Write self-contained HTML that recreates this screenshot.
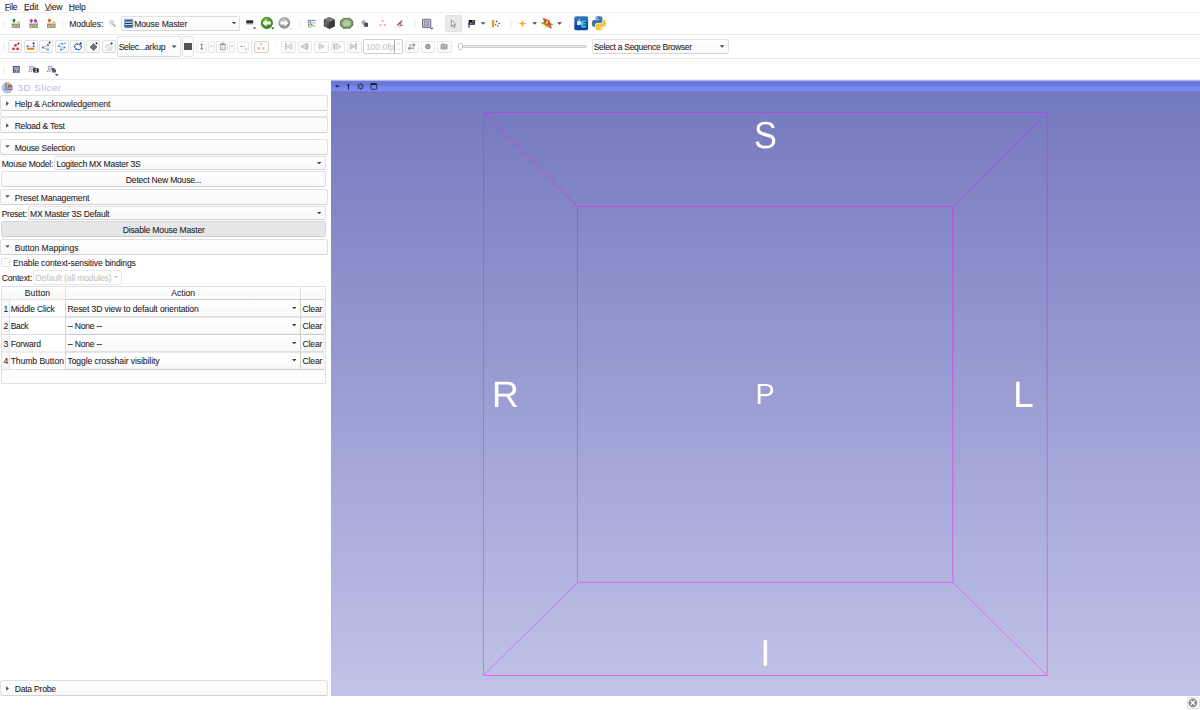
<!DOCTYPE html>
<html><head><meta charset="utf-8"><title>3D Slicer</title>
<style>
html,body{margin:0;padding:0;background:#fff;overflow:hidden}
body{width:1200px;height:710px;position:relative;font-family:"Liberation Sans", sans-serif;}
body div, body svg, body span{position:absolute;}
.t{transform-origin:0 0;white-space:pre;line-height:12px;font-family:"Liberation Sans", sans-serif;-webkit-text-stroke:0.06px currentColor;}
</style></head>
<body>
<span class="t" style="left:4px;top:0px;transform:translate(0.66px,0.5px) rotate(0.001deg);font-size:8.6px;letter-spacing:-0.289px;color:#1e2022;">File</span>
<span class="t" style="left:23px;top:0px;transform:translate(0.96px,0.5px) rotate(0.001deg);font-size:8.6px;letter-spacing:-0.153px;color:#1e2022;">Edit</span>
<span class="t" style="left:44px;top:0px;transform:translate(0.66px,0.5px) rotate(0.001deg);font-size:8.6px;letter-spacing:-0.196px;color:#1e2022;">View</span>
<span class="t" style="left:68px;top:0px;transform:translate(0.66px,0.5px) rotate(0.001deg);font-size:8.6px;letter-spacing:-0.171px;color:#1e2022;">Help</span>
<svg style="left:0;top:9px" width="90" height="3" viewBox="0 9 90 3"><path d="M5.1 10.45H9M24.4 10.45H28.8M45 10.45H50.2M69 10.45H74.6" stroke="#4a4c4e" stroke-width="0.7"/></svg>
<div style="left:0px;top:12px;width:1200px;height:1px;background:#efefef"></div>
<div style="left:0px;top:34px;width:1200px;height:1px;background:#e9e9e9"></div>
<div style="left:0px;top:58px;width:1200px;height:1px;background:#e9e9e9"></div>
<div style="left:0px;top:79px;width:1200px;height:1px;background:#ebebeb"></div>
<div style="left:2.9000000000000004px;top:19.5px;width:1.8px;height:8px;background:#f4f4f4;border-radius:1px"></div>
<div style="left:62.7px;top:19.5px;width:1.8px;height:8px;background:#f4f4f4;border-radius:1px"></div>
<div style="left:299.2px;top:19.5px;width:1.8px;height:8px;background:#f4f4f4;border-radius:1px"></div>
<div style="left:414.2px;top:19.5px;width:1.8px;height:8px;background:#f4f4f4;border-radius:1px"></div>
<div style="left:440.7px;top:19.5px;width:1.8px;height:8px;background:#f4f4f4;border-radius:1px"></div>
<div style="left:510.2px;top:19.5px;width:1.8px;height:8px;background:#f4f4f4;border-radius:1px"></div>
<div style="left:568.7px;top:19.5px;width:1.8px;height:8px;background:#f4f4f4;border-radius:1px"></div>
<span class="t" style="left:69px;top:17px;transform:translate(0.16px,0.5px) rotate(0.001deg);font-size:8.6px;letter-spacing:-0.097px;color:#1e2022;">Modules:</span>
<div style="left:121px;top:16px;width:119px;height:15px;border:1px solid #e0e0e0;border-bottom-color:#d4d4d4;border-radius:2.5px;background:linear-gradient(#fff,#fafafa);box-sizing:border-box"></div>
<span class="t" style="left:134px;top:17px;transform:translate(0.16px,0.5px) rotate(0.001deg);font-size:8.6px;letter-spacing:-0.113px;color:#1e2022;">Mouse Master</span>
<svg style="left:0px;top:13px" width="620" height="21" viewBox="0 13 620 21">
<defs>
<linearGradient id="gFold" x1="0" y1="0" x2="0" y2="1"><stop offset="0" stop-color="#eadb96"/><stop offset="0.28" stop-color="#d9c984"/><stop offset="0.3" stop-color="#8f8b7c"/><stop offset="0.78" stop-color="#9a9685"/><stop offset="0.8" stop-color="#c9b873"/><stop offset="1" stop-color="#a8975a"/></linearGradient>
<radialGradient id="gGreen" cx="0.38" cy="0.3" r="0.75"><stop offset="0" stop-color="#7cc44c"/><stop offset="0.55" stop-color="#4a9a28"/><stop offset="1" stop-color="#2f7a18"/></radialGradient>
<radialGradient id="gGrey" cx="0.4" cy="0.3" r="0.75"><stop offset="0" stop-color="#c4c4c4"/><stop offset="0.6" stop-color="#9c9c9c"/><stop offset="1" stop-color="#858585"/></radialGradient>
<linearGradient id="gHist" x1="0" y1="0" x2="0" y2="1"><stop offset="0" stop-color="#0a0a0a"/><stop offset="0.45" stop-color="#3a3a3a"/><stop offset="0.75" stop-color="#a8a8a8"/><stop offset="1" stop-color="#f2f2f2"/></linearGradient>
<linearGradient id="gMod" x1="0" y1="0" x2="0" y2="1"><stop offset="0" stop-color="#7aa8dc"/><stop offset="1" stop-color="#5585c0"/></linearGradient>
<linearGradient id="gExt" x1="0" y1="0" x2="0" y2="1"><stop offset="0" stop-color="#3f7cc4"/><stop offset="0.5" stop-color="#1458ac"/><stop offset="1" stop-color="#06409a"/></linearGradient>
<radialGradient id="gBrain" cx="0.5" cy="0.5" r="0.6"><stop offset="0" stop-color="#b4cca4"/><stop offset="0.6" stop-color="#8eac7c"/><stop offset="1" stop-color="#4c6a3a"/></radialGradient>
<g id="fold"><path d="M0.2 4.3H5.4L6 2.9H7.9L8.5 4.3V9.3H0.2Z" fill="#a89a62"/><path d="M5.7 4.2L6.2 3.2H7.7L8.1 4.2Z" fill="#ecd673"/><rect x="0.5" y="4.5" width="7.8" height="4.6" fill="url(#gFold)"/><path d="M1.2 7.2H2.6M3.2 6.6H4.6M5.2 7.3H7.2M1.4 8H3M5.6 6.6H7" stroke="#e8e6dc" stroke-width="0.7"/></g>
<path id="dd" d="M0 0H4.4L2.2 2.3Z"/>
</defs>
<!-- load data icons -->
<use href="#fold" x="11.5" y="18.6"/><path d="M14 18.5L16.3 20.6H15V22.6H13V20.6H11.7Z" fill="#238052"/>
<use href="#fold" x="29.2" y="18.6"/><path d="M31.3 18.7L33.1 20.6L31.9 22.8H30.7L29.5 20.6Z M35.4 18.7L37.3 20.6L36 22.8H34.8L33.6 20.6Z" fill="#a63fc6"/>
<use href="#fold" x="46.9" y="18.6"/><path d="M48.3 18.8H50.5V20.4H51.4L49.4 22.8L47.4 20.4H48.3Z" fill="#d4500f"/>
<!-- search -->
<path d="M113 24L115 26.2" stroke="#d2a05c" stroke-width="1.5" stroke-linecap="round"/><circle cx="111.7" cy="22.4" r="2.4" fill="#c3daf5"/>
<!-- module icon -->
<rect x="124" y="18.8" width="9.2" height="9.2" rx="1.4" fill="url(#gMod)"/>
<path d="M125.2 21H132.2M125.2 23.4H132.2M125.2 25.7H132.2" stroke="#1c2c40" stroke-width="1"/>
<path d="M125.4 22.2H132M125.4 24.6H132" stroke="#e8f2f8" stroke-width="0.9"/>
<use href="#dd" x="231.8" y="22" fill="#444"/>
<!-- history -->
<rect x="246.2" y="20.4" width="7" height="4.6" fill="url(#gHist)"/>
<use href="#dd" x="252.8" y="27.4" fill="#444" transform="translate(50.56 5.48) scale(0.8)"/>
<!-- back / forward -->
<circle cx="266.8" cy="22.9" r="5.9" fill="url(#gGreen)"/><circle cx="266.8" cy="22.9" r="5.6" fill="none" stroke="#2c7416" stroke-width="0.6"/>
<path d="M262.6 23L266.4 19.3V21.6H270.8V24.4H266.4V26.7Z" fill="#fff"/>
<path d="M271 27.5H274.6L272.8 29.5Z" fill="#444"/>
<circle cx="284.3" cy="22.9" r="5.9" fill="url(#gGrey)"/>
<path d="M288.5 23L284.7 19.3V21.6H280.3V24.4H284.7V26.7Z" fill="#fff"/>
<path d="M289 28H292.2L290.6 29.6Z" fill="#cfcfcf"/>
<!-- data tree -->
<path d="M308.4 20V27.3" stroke="#8a8a8a" stroke-width="0.9"/><path d="M308 20.3H315.8" stroke="#6a6a6a" stroke-width="0.8"/><path d="M311.5 23H315.8M311.8 26H315.8" stroke="#b4b4b4" stroke-width="1.1"/>
<rect x="309.5" y="21.2" width="1.7" height="2" fill="#5a9cf0"/><path d="M309.6 23.4H311.2L312.7 25.4H311Z" fill="#2f9e52"/><circle cx="312.2" cy="25.2" r="0.9" fill="#6fd08a"/><rect x="309.3" y="24.6" width="1.4" height="1.8" fill="#fff" stroke="#999" stroke-width="0.3"/><circle cx="310.4" cy="27" r="0.9" fill="#f2a340"/>
<!-- cube -->
<path d="M329.2 17.1L334.7 19.6V26.3L329.2 29L323.8 26.3V19.6Z" fill="#4a4a4a"/><path d="M329.2 17.1L334.7 19.6L329.2 22.2L323.8 19.6Z" fill="#7c7c7c"/><path d="M329.2 22.2L334.7 19.6V26.3L329.2 29Z" fill="#383838"/><path d="M326 20.7V27.3M323.8 23H329.2" stroke="#9a9a9a" stroke-width="0.5"/>
<!-- brain volume rendering -->
<path d="M343.4 18.4H349.8L352.8 21.1V25.5L349.8 28.2H343.4L340.4 25.5V21.1Z" fill="url(#gBrain)" stroke="#40602e" stroke-width="0.7"/><path d="M345.2 21.2C343.6 21.2 343.4 25.4 345 25.6C346.2 25.7 346.4 24.2 346.4 23.2M348 21.2C349.6 21.2 349.8 25.4 348.2 25.6C347 25.7 346.8 24.2 346.8 23.2M346.6 19.8V21.6" stroke="#d6e4cc" stroke-width="0.8" fill="none"/>
<!-- transforms -->
<path d="M363.6 19.6L366.6 22.6L363.6 25.6L360.8 22.6Z" fill="#b2b2b2"/><rect x="364.2" y="22.9" width="3.8" height="3.9" fill="#4c4c4c"/>
<!-- markups (salmon) -->
<g fill="#f5aa9a"><path d="M381.3 20.1H383.9L382.6 22.6Z"/><path d="M379.1 24H381.9L380.5 26.7Z"/><path d="M383.3 24H386.1L384.7 26.7Z"/><path d="M381.6 19.6L383.6 21.4M383.6 19.6L381.6 21.4" stroke="#f5aa9a" stroke-width="0.5"/></g>
<!-- segment editor -->
<path d="M397.6 25L402 20.8" stroke="#4e4e4e" stroke-width="1.1" stroke-linecap="round"/><circle cx="400" cy="23.4" r="0.9" fill="#2878e0"/><circle cx="401.7" cy="23.5" r="0.9" fill="#f6d030"/><circle cx="400.4" cy="25.3" r="0.9" fill="#f03030"/><circle cx="401.8" cy="25.3" r="0.9" fill="#c050f0"/><ellipse cx="398.6" cy="26" rx="1.5" ry="0.9" fill="#fff" stroke="#f08090" stroke-width="0.5"/>
<!-- layout -->
<rect x="422.5" y="19.3" width="8.3" height="8.3" rx="0.6" fill="#c9c9f2" stroke="#5e5e6e" stroke-width="0.9"/><rect x="424.3" y="21.1" width="4.5" height="4.8" fill="#b4b4d8" stroke="#7c7c90" stroke-width="0.7"/><path d="M425 25.2L428.2 21.8M428.8 25.9L426.6 23.4" stroke="#86869a" stroke-width="0.5"/>
<path d="M430 27.7H433.6L431.8 29.6Z" fill="#444"/>
<!-- pointer (checked) -->
<rect x="445.4" y="15.4" width="16.2" height="16.2" rx="1.2" fill="#e9e9e9" stroke="#dadada" stroke-width="0.8"/>
<path d="M451.3 20V26.6L452.9 25.2L454 27.4L455 26.9L454 24.8L455.9 24.4Z" fill="#f6f6f6" stroke="#6a6a6a" stroke-width="0.7" stroke-linejoin="round"/>
<!-- window level flag -->
<path d="M469 22.6L470.3 24.2H469.5V26.2H470.3L469 27.9L467.7 26.2H468.5V24.2H467.7Z" fill="#2342c4"/>
<rect x="468.8" y="20" width="6.1" height="4.7" fill="#0c0c0c"/><rect x="472" y="20.7" width="2.2" height="0.8" fill="#f4f4f4"/>
<rect x="469.8" y="22.5" width="0.9" height="1.5" fill="#f0e020"/><rect x="470.7" y="22.5" width="0.9" height="1.5" fill="#20e020"/><rect x="471.6" y="22.5" width="0.8" height="1.5" fill="#20d8e0"/><rect x="472.4" y="22.5" width="0.8" height="1.5" fill="#3040f0"/><rect x="473.2" y="22.5" width="0.8" height="1.5" fill="#e020e0"/><rect x="474" y="22.5" width="0.6" height="1.5" fill="#f02020"/>
<path d="M480.9 22.2H485.4L483.15 24.7Z" fill="#444"/>
<!-- ruler / angle -->
<rect x="491.9" y="19.8" width="2.3" height="7.6" fill="#e2a224"/><path d="M492 21.5H493M492 23.5H493.4M492 25.5H493" stroke="#b87c10" stroke-width="0.4"/>
<path d="M495.2 20.6A3.9 3.9 0 0 1 495.2 27Z" fill="#e4e4ea"/><path d="M495.2 23.8L499.6 21.6M495.2 23.8L498.4 27" stroke="#fff" stroke-width="0.6"/>
<g fill="#4646c4"><circle cx="496.6" cy="21.4" r="0.8"/><circle cx="499.2" cy="23.4" r="0.8"/><circle cx="495.6" cy="24.6" r="0.7"/><circle cx="497.8" cy="26" r="0.8"/></g>
<!-- crosshair -->
<path d="M522.6 19.8L523.5 22.7L526.7 23.6L523.5 24.5L522.6 27.5L521.7 24.5L518.6 23.6L521.7 22.7Z" fill="#f0a336"/>
<path d="M532.3 22.2H537L534.65 24.7Z" fill="#444"/>
<!-- slice intersections star -->
<path d="M540.4 22.7L546.2 21.5L553.9 24.3L547.8 26.7Z" fill="#74b242"/>
<path d="M551 18.1L546.4 21.2L544.2 28.9L548.8 25.4Z" fill="#f4e86e"/>
<path d="M542.7 17.8L549.4 20.4L552 29L545.5 25.6Z" fill="#e2342a" fill-opacity="0.92"/>
<path d="M546.2 21L548.6 20.4L547.4 24L545.4 24.6Z" fill="#f0dc4a" fill-opacity="0.9"/>
<path d="M546 25.2L549.6 24.6L550.4 26L547.6 26.8Z" fill="#84ba4a" fill-opacity="0.9"/>
<path d="M557.2 22.2H561.9L559.55 24.7Z" fill="#444"/>
<!-- extensions -->
<rect x="574.3" y="16.2" width="13.8" height="14" rx="1.8" fill="url(#gExt)"/>
<path d="M577 21.2H578.6V19.2H580V21.2L581.8 22V24.2L580 25H577Z" fill="#e2e6ea"/><path d="M578.4 19.4H579.6V20.6H578.4Z" fill="#a8aeb8"/>
<path d="M581.4 20.4H586.2V21.8H583.2V23H585.6V24.4H583.2V25.8H586.2V27.4H581.4Z" fill="#46c4dc"/>
<!-- python -->
<g transform="translate(591.9 16.2) scale(0.59)">
<path fill="#3b77a8" fill-rule="evenodd" d="M14.25.18l.9.2.73.26.59.3.45.32.34.34.25.34.16.33.1.3.04.26.02.2-.01.13V8.5l-.05.63-.13.55-.21.46-.26.38-.3.31-.33.25-.35.19-.35.14-.33.1-.3.07-.26.04-.21.02H8.77l-.69.05-.59.14-.5.22-.41.27-.33.32-.27.35-.2.36-.15.37-.1.35-.07.32-.04.27-.02.21v3.06H3.17l-.21-.03-.28-.07-.32-.12-.35-.18-.36-.26-.36-.36-.35-.46-.32-.59-.28-.73-.21-.88-.14-1.05-.05-1.23.06-1.22.16-1.04.24-.87.32-.71.36-.57.4-.44.42-.33.42-.24.4-.16.36-.1.32-.05.24-.01h.16l.06.01h8.16v-.83H6.18l-.01-2.75-.02-.37.05-.34.11-.31.17-.28.25-.26.31-.23.38-.2.44-.18.51-.15.58-.12.64-.1.71-.06.77-.04.84-.02 1.27.05zM7.95 2.16l-.23.33-.08.41.08.41.23.34.33.22.41.09.41-.09.33-.22.23-.34.08-.41-.08-.41-.23-.33-.33-.22-.41-.09-.41.09z"/>
<path fill="#f8c63c" fill-rule="evenodd" d="M21.04 6.11l.28.06.32.12.35.18.36.27.36.35.35.47.32.59.28.73.21.88.14 1.04.05 1.23-.06 1.23-.16 1.04-.24.86-.32.71-.36.57-.4.45-.42.33-.42.24-.4.16-.36.09-.32.05-.24.02-.16-.01h-8.22v.82h5.84l.01 2.76.02.36-.05.34-.11.31-.17.29-.25.25-.31.24-.38.2-.44.17-.51.15-.58.13-.64.09-.71.07-.77.04-.84.01-1.27-.04-1.07-.14-.9-.2-.73-.25-.59-.3-.45-.33-.34-.34-.25-.34-.16-.33-.1-.3-.04-.25-.02-.2.01-.13v-5.34l.05-.64.13-.54.21-.46.26-.38.3-.32.33-.24.35-.2.35-.14.33-.1.3-.06.26-.04.21-.02.13-.01h5.84l.69-.05.59-.14.5-.21.41-.28.33-.32.27-.35.2-.36.15-.36.1-.35.07-.32.04-.28.02-.21V6.07h2.09l.14.01zM14.57 20.36l-.23.33-.08.41.08.41.23.33.33.23.41.08.41-.08.33-.23.23-.33.08-.41-.08-.41-.23-.33-.33-.23-.41-.08-.41.08z"/>
</g>
</svg>

<div style="left:2.9000000000000004px;top:43px;width:1.8px;height:8px;background:#f4f4f4;border-radius:1px"></div>
<div style="left:274.59999999999997px;top:43px;width:1.8px;height:7px;background:#f4f4f4;border-radius:1px"></div>
<div style="left:8px;top:40px;width:14px;height:13px;border:1px solid #e0e0e0;border-bottom-color:#d6d6d6;border-radius:2px;background:linear-gradient(#fefefe,#f9f9f9);box-sizing:border-box"></div>
<div style="left:24px;top:40px;width:14px;height:13px;border:1px solid #e0e0e0;border-bottom-color:#d6d6d6;border-radius:2px;background:linear-gradient(#fefefe,#f9f9f9);box-sizing:border-box"></div>
<div style="left:39px;top:40px;width:14px;height:13px;border:1px solid #e0e0e0;border-bottom-color:#d6d6d6;border-radius:2px;background:linear-gradient(#fefefe,#f9f9f9);box-sizing:border-box"></div>
<div style="left:55px;top:40px;width:14px;height:13px;border:1px solid #e0e0e0;border-bottom-color:#d6d6d6;border-radius:2px;background:linear-gradient(#fefefe,#f9f9f9);box-sizing:border-box"></div>
<div style="left:70px;top:40px;width:15px;height:13px;border:1px solid #e0e0e0;border-bottom-color:#d6d6d6;border-radius:2px;background:linear-gradient(#fefefe,#f9f9f9);box-sizing:border-box"></div>
<div style="left:86px;top:40px;width:14px;height:13px;border:1px solid #e0e0e0;border-bottom-color:#d6d6d6;border-radius:2px;background:linear-gradient(#fefefe,#f9f9f9);box-sizing:border-box"></div>
<div style="left:102px;top:40px;width:14px;height:13px;border:1px solid #e0e0e0;border-bottom-color:#d6d6d6;border-radius:2px;background:linear-gradient(#fefefe,#f9f9f9);box-sizing:border-box"></div>
<div style="left:117px;top:36px;width:64px;height:21px;border:1px solid #e0e0e0;border-bottom-color:#d4d4d4;border-radius:2.5px;background:linear-gradient(#fff,#fafafa);box-sizing:border-box"></div>
<span class="t" style="left:118px;top:41px;transform:translate(0.66px,0px) rotate(0.001deg);font-size:8.6px;letter-spacing:-0.275px;color:#1e2022;">Selec...arkup</span>
<div style="left:182px;top:36px;width:12px;height:21px;border:1px solid #e0e0e0;border-radius:2.5px;background:#fdfdfd;box-sizing:border-box"></div>
<div style="left:184.2px;top:43px;width:7.4px;height:7.2px;background:#555555"></div>
<div style="left:196px;top:40.5px;width:10.800000000000011px;height:12.5px;border:1px solid #e9e9e9;border-bottom-color:#e2e2e2;border-radius:2px;background:#fcfcfc;box-sizing:border-box"></div>
<div style="left:208px;top:40.5px;width:6.5px;height:12.5px;border:1px solid #e9e9e9;border-bottom-color:#e2e2e2;border-radius:2px;background:#fcfcfc;box-sizing:border-box"></div>
<div style="left:216.3px;top:40.5px;width:11.899999999999977px;height:12.5px;border:1px solid #e9e9e9;border-bottom-color:#e2e2e2;border-radius:2px;background:#fcfcfc;box-sizing:border-box"></div>
<div style="left:229px;top:40.5px;width:6.300000000000011px;height:12.5px;border:1px solid #e9e9e9;border-bottom-color:#e2e2e2;border-radius:2px;background:#fcfcfc;box-sizing:border-box"></div>
<div style="left:237px;top:40.5px;width:12.199999999999989px;height:12.5px;border:1px solid #e9e9e9;border-bottom-color:#e2e2e2;border-radius:2px;background:#fcfcfc;box-sizing:border-box"></div>
<div style="left:251.3px;top:39px;width:0.8px;height:15px;background:#e8e8e8"></div>
<div style="left:253.5px;top:40.5px;width:15px;height:12.5px;border:1px solid #cfcfcf;border-radius:2px;background:#fdfdfd;box-sizing:border-box"></div>
<div style="left:281px;top:40.5px;width:14.5px;height:12.5px;border:1px solid #e9e9e9;border-bottom-color:#e2e2e2;border-radius:2px;background:#fcfcfc;box-sizing:border-box"></div>
<div style="left:297.5px;top:40.5px;width:14.5px;height:12.5px;border:1px solid #e9e9e9;border-bottom-color:#e2e2e2;border-radius:2px;background:#fcfcfc;box-sizing:border-box"></div>
<div style="left:314px;top:40.5px;width:14.5px;height:12.5px;border:1px solid #e9e9e9;border-bottom-color:#e2e2e2;border-radius:2px;background:#fcfcfc;box-sizing:border-box"></div>
<div style="left:330.5px;top:40.5px;width:14.5px;height:12.5px;border:1px solid #e9e9e9;border-bottom-color:#e2e2e2;border-radius:2px;background:#fcfcfc;box-sizing:border-box"></div>
<div style="left:347px;top:40.5px;width:14.5px;height:12.5px;border:1px solid #e9e9e9;border-bottom-color:#e2e2e2;border-radius:2px;background:#fcfcfc;box-sizing:border-box"></div>
<div style="left:404.5px;top:40.5px;width:14.5px;height:12.5px;border:1px solid #e9e9e9;border-bottom-color:#e2e2e2;border-radius:2px;background:#fcfcfc;box-sizing:border-box"></div>
<div style="left:420.5px;top:40.5px;width:14.5px;height:12.5px;border:1px solid #e9e9e9;border-bottom-color:#e2e2e2;border-radius:2px;background:#fcfcfc;box-sizing:border-box"></div>
<div style="left:437px;top:40.5px;width:14.5px;height:12.5px;border:1px solid #e9e9e9;border-bottom-color:#e2e2e2;border-radius:2px;background:#fcfcfc;box-sizing:border-box"></div>
<div style="left:363px;top:39px;width:40px;height:15px;border:1px solid #cfcfcf;border-radius:2px;background:#fff;box-sizing:border-box"></div>
<div style="left:394.3px;top:40px;width:0.8px;height:13px;background:#a8a8a8"></div>
<div style="left:364.3px;top:40.3px;width:30px;height:12.4px;overflow:hidden"><span class="t" style="left:1.6px;top:0.70px;font-size:8.6px;letter-spacing:-0.05px;color:#c4c4c8">100.0fps</span></div>
<div style="left:462px;top:45px;width:124.5px;height:2.8px;border:0.8px solid #cfcfcf;background:#e4e4e4;border-radius:1.4px;box-sizing:border-box"></div>
<div style="left:458.3px;top:42.5px;width:4.4px;height:7.2px;border:0.8px solid #c4c4c4;background:#fff;border-radius:1.5px;box-sizing:border-box"></div>
<div style="left:592px;top:39px;width:137px;height:15px;border:1px solid #e0e0e0;border-bottom-color:#d4d4d4;border-radius:2.5px;background:linear-gradient(#fff,#fafafa);box-sizing:border-box"></div>
<span class="t" style="left:593px;top:41px;transform:translate(0.66px,0px) rotate(0.001deg);font-size:8.6px;letter-spacing:-0.318px;color:#1e2022;">Select a Sequence Browser</span>
<svg style="left:0px;top:35px" width="740" height="23" viewBox="0 35 740 23">
<defs>
<radialGradient id="gRed" cx="0.4" cy="0.35" r="0.7"><stop offset="0" stop-color="#f24050"/><stop offset="1" stop-color="#cc0818"/></radialGradient>
<g id="plus"><path d="M-1.1 0H1.1M0 -1.1V1.1" stroke="#1a1a1a" stroke-width="0.8"/></g>
</defs>
<!-- fiducial -->
<circle cx="15.5" cy="45.3" r="1.35" fill="url(#gRed)"/><circle cx="13.5" cy="48.8" r="1.4" fill="url(#gRed)"/><circle cx="17.6" cy="48.8" r="1.4" fill="url(#gRed)"/>
<use href="#plus" x="18.4" y="43.6"/>
<!-- ruler -->
<rect x="26.9" y="47.7" width="7.4" height="2.1" fill="#e09a22"/><path d="M28 48V49.4M29.5 48V49.4M31 48V49.4M32.5 48V49.4" stroke="#c07a10" stroke-width="0.4"/>
<path d="M28 46.3H33.4" stroke="#f4b0b0" stroke-width="0.6"/><circle cx="27.5" cy="46.2" r="1" fill="#2a6cf0"/><circle cx="33.7" cy="46.2" r="1" fill="#2a6cf0"/>
<use href="#plus" x="33.6" y="43.4"/>
<!-- angle -->
<path d="M48 45L42.8 47.5L48 49.6" stroke="#9a9a9a" stroke-width="0.7" fill="none"/><path d="M46.6 45.8A2.6 2.6 0 0 1 46.6 49" stroke="#f4a8a8" stroke-width="0.5" fill="none"/>
<circle cx="42.8" cy="47.5" r="0.95" fill="#2a6cf0"/><circle cx="48" cy="45" r="0.95" fill="#2a6cf0"/><circle cx="48" cy="49.6" r="0.95" fill="#2a6cf0"/>
<use href="#plus" x="49.6" y="42.6"/>
<!-- curve -->
<path d="M63.4 43.6C59 42.8 57.6 46.4 61 46.9C65.6 47.4 65 50.6 60 49.6" stroke="#a8a8a8" stroke-width="0.8" fill="none"/>
<circle cx="62.3" cy="43.8" r="0.9" fill="#2a7cf4"/><circle cx="58.8" cy="46.2" r="0.9" fill="#2a7cf4"/><circle cx="64.5" cy="47.4" r="0.9" fill="#2a7cf4"/><circle cx="61" cy="49.5" r="0.9" fill="#2a7cf4"/>
<path d="M64.4 43.3H66.2" stroke="#333" stroke-width="0.7"/>
<!-- closed curve -->
<ellipse cx="77.9" cy="46.8" rx="3.6" ry="2.8" transform="rotate(20 77.9 46.8)" stroke="#555" stroke-width="0.9" fill="none"/>
<circle cx="77" cy="44" r="0.85" fill="#2a7cf4"/><circle cx="74.7" cy="46.4" r="0.85" fill="#2a7cf4"/><circle cx="80.4" cy="45.4" r="0.85" fill="#2a7cf4"/><circle cx="76" cy="48.9" r="0.85" fill="#2a7cf4"/><circle cx="78.6" cy="49.6" r="0.85" fill="#2a7cf4"/>
<use href="#plus" x="80.8" y="43.3"/>
<!-- plane -->
<path d="M93.6 43.4L97 47L93.6 50.6L90 47Z" fill="#727272" stroke="#565656" stroke-width="0.6"/>
<use href="#plus" x="96.6" y="43.3"/>
<!-- ROI -->
<circle cx="109" cy="47.4" r="3.2" fill="#f4f7fc" stroke="#bcd0ee" stroke-width="0.7"/><circle cx="109.8" cy="48.2" r="1.5" fill="none" stroke="#f6c0c4" stroke-width="0.5"/><circle cx="107.4" cy="45.4" r="0.5" fill="#f2a8b0"/><circle cx="109" cy="45" r="0.5" fill="#f2a8b0"/><circle cx="106.6" cy="47.4" r="0.5" fill="#f2a8b0"/><circle cx="109.8" cy="48.2" r="0.4" fill="#f2a8b0"/>
<use href="#plus" x="111.6" y="43.4"/>
<!-- combobox arrow -->
<path d="M171.8 45.4H176.6L174.2 48Z" fill="#444"/>
<!-- up/down -->
<path d="M201.7 42.9L203.5 45H202.3V48H203.5L201.7 50.2L199.9 48H201.1V45H199.9Z" fill="#9c9c9c"/>
<path d="M209.6 45.5H213L211.3 47.2Z" fill="#c6c6c6"/>
<!-- trash -->
<path d="M220.4 44.4H225.2V49.8H220.4ZM219.8 44.4H225.8M221.8 44.2V43.2H223.8V44.2" stroke="#858585" stroke-width="0.75" fill="#fafafa"/><path d="M222.8 45V49.4" stroke="#a0a0a0" stroke-width="0.5"/>
<path d="M230.3 45.5H233.7L232 47.2Z" fill="#c6c6c6"/>
<circle cx="241.4" cy="46.4" r="0.7" fill="#666"/><path d="M242.4 46.4H245" stroke="#bbb" stroke-width="0.6"/><path d="M244.2 48.6H247.8L246 50.3Z" fill="#c0c0c0"/>
<!-- salmon markups -->
<g fill="#f4967c"><path d="M259.7 43H262.5L261.1 45.8Z"/><path d="M257.3 47.4H260.3L258.8 50.2Z"/><path d="M261.7 47.4H264.7L263.2 50.2Z"/></g><path d="M260.2 42.8L262 44.6M262 42.8L260.2 44.6" stroke="#fff" stroke-width="0.35"/><path d="M257.9 47.6L259.7 49.2M262.3 47.6L264.1 49.2" stroke="#fff" stroke-width="0.3"/>
<!-- sequence buttons (disabled) -->
<g fill="#c2c2c2" stroke="none">
<rect x="285" y="43.2" width="1.7" height="6.4"/><path d="M291.8 43.4V49.4L287 46.4Z" fill="#e4e4e4" stroke="#bcbcbc" stroke-width="0.7"/>
<path d="M306.8 43.3V49.5L300.6 46.4Z" fill="#d8d8d8" stroke="#bcbcbc" stroke-width="0.7"/><rect x="306.6" y="43.2" width="1.7" height="6.4"/>
<path d="M319.2 43.5V49.5L324.2 46.5Z" fill="#dcdcdc" stroke="#bcbcbc" stroke-width="0.7"/>
<rect x="333.2" y="43.2" width="1.9" height="6.4"/><path d="M336 43.5V49.5L341 46.5Z" fill="#e4e4e4" stroke="#bcbcbc" stroke-width="0.7"/>
<path d="M350.2 43.5V49.5L355 46.5Z" fill="#d4d4d4" stroke="#bcbcbc" stroke-width="0.7"/><rect x="355" y="43.2" width="1.9" height="6.4"/>
</g>
<!-- spin arrows -->
<path d="M396.6 44.6L398.5 42.9L400.4 44.6" stroke="#c4c4c4" stroke-width="0.7" fill="none"/><path d="M396.6 48.4L398.5 50.1L400.4 48.4" stroke="#c4c4c4" stroke-width="0.7" fill="none"/>
<!-- loop -->
<path d="M409 45.6V44.4H413.4V42.6L415.4 44.9L413.4 47.2V45.6ZM414.2 47.6V48.8H409.8V50.6L407.8 48.3L409.8 46V47.6Z" fill="#8c8c8c"/>
<!-- record -->
<circle cx="427.8" cy="46.5" r="2.3" fill="#b4b4b4" stroke="#7c7c7c" stroke-width="0.9"/><circle cx="427.8" cy="46.5" r="0.8" fill="#8a8a8a"/>
<!-- snapshot -->
<rect x="440.6" y="44.2" width="7" height="5.2" fill="#9a9a9a"/><rect x="441.8" y="43.4" width="2" height="1" fill="#9a9a9a"/><rect x="441.6" y="45.2" width="1.8" height="1.5" fill="#cfcfcf"/><rect x="444.6" y="45.2" width="1.8" height="1.5" fill="#cfcfcf"/><rect x="441.6" y="47.4" width="1.8" height="1.3" fill="#bdbdbd"/><rect x="444.6" y="47.4" width="1.8" height="1.3" fill="#bdbdbd"/>
<!-- sequence combobox arrow -->
<path d="M719.8 45.2H724.4L722.1 47.7Z" fill="#444"/>
</svg>

<div style="left:2.9000000000000004px;top:66px;width:1.8px;height:7.5px;background:#f4f4f4;border-radius:1px"></div>
<svg style="left:0px;top:60px" width="70" height="19" viewBox="0 60 70 19">
<rect x="12.9" y="66.1" width="6.8" height="6.6" rx="0.5" fill="#2c2c44"/><rect x="13.5" y="66.7" width="5.6" height="2" fill="#a2aaf2"/>
<rect x="14.1" y="69.3" width="2.1" height="2.7" fill="none" stroke="#eee" stroke-width="0.6"/><rect x="16.9" y="69.3" width="2.1" height="2.7" fill="none" stroke="#eee" stroke-width="0.6"/>
<rect x="29.5" y="66.2" width="3.8" height="3.8" fill="#ccd0f8" stroke="#909098" stroke-width="0.6"/><path d="M29.4 70V72.2" stroke="#a0a0a8" stroke-width="0.5"/><circle cx="29" cy="71.6" r="0.6" fill="#e05030"/><circle cx="31.5" cy="71.6" r="0.6" fill="#d04020"/>
<rect x="33.2" y="68.2" width="5.4" height="4.4" rx="0.6" fill="#1a1a1a"/><rect x="34" y="67.6" width="2" height="0.9" fill="#333"/><rect x="34.8" y="69.2" width="2.2" height="2.6" fill="#f2f2f2"/><circle cx="35.9" cy="70.5" r="0.7" fill="#111"/>
<rect x="48.2" y="66.2" width="3.8" height="3.8" fill="#ccd0f8" stroke="#909098" stroke-width="0.6"/><path d="M48.1 70V72.2" stroke="#a0a0a8" stroke-width="0.5"/><circle cx="47.4" cy="71.6" r="0.6" fill="#e05030"/><circle cx="49.8" cy="71.6" r="0.6" fill="#d04020"/>
<path d="M51.6 68.2L54.2 68L56 70L55.8 72.4H52.2Z" fill="#505050"/><circle cx="54" cy="70.4" r="1.1" fill="none" stroke="#888" stroke-width="0.5"/>
<path d="M54.8 74H58.6L56.7 76Z" fill="#444"/>
</svg>
<svg style="left:0px;top:80px" width="16" height="15" viewBox="0 80 16 15">
<defs><clipPath id="lgc"><circle cx="7.35" cy="87.7" r="5.4"/></clipPath></defs>
<circle cx="7.35" cy="87.7" r="5.4" fill="#b3bddd"/>
<g clip-path="url(#lgc)">
<path d="M6.2 82V89.4H13" stroke="#6c7488" stroke-width="1.3" fill="none"/>
<rect x="6.9" y="81.5" width="6.5" height="7.2" fill="#d8dcec"/>
<rect x="9.4" y="84.4" width="1.8" height="3" fill="#a8502e"/>
<rect x="7.4" y="87.6" width="4.6" height="1.1" fill="#9098ac"/>
</g>
<circle cx="8.4" cy="83.5" r="0.9" fill="#f2c820"/><circle cx="8.3" cy="85.1" r="0.9" fill="#30985c"/><circle cx="8.5" cy="86.8" r="0.95" fill="#ec2428"/><circle cx="11.6" cy="86.5" r="0.85" fill="#2860c0"/>
<circle cx="7.35" cy="87.7" r="5.4" fill="none" stroke="#a4aecc" stroke-width="0.4"/>
</svg>

<span class="t" style="left:17px;top:81px;transform:translate(0.61px,0.5px) rotate(0.001deg);font-size:9.7px;letter-spacing:0.518px;color:#b2bbdc;-webkit-text-stroke:0;">3D Slicer</span>
<div style="left:0px;top:95px;width:328px;height:16px;border:1px solid #e0e0e0;border-bottom-color:#d2d2d2;border-radius:2.5px;background:linear-gradient(#fefefe,#fafafa);box-sizing:border-box"></div>
<span class="t" style="left:14px;top:98px;transform:translate(0.66px,0px) rotate(0.001deg);font-size:8.6px;letter-spacing:-0.106px;color:#1e2022;">Help &amp; Acknowledgement</span>
<svg style="left:6.3px;top:100.6px" width="3" height="5" viewBox="0 0 3 5"><path d="M0.2 0.2V4.8L2.8 2.5Z" fill="#444"/></svg>
<div style="left:0px;top:111px;width:328px;height:6px;border:1px solid #e4e4e4;border-top:none;border-radius:0 0 2.5px 2.5px;box-sizing:border-box"></div>
<div style="left:0px;top:117px;width:328px;height:16px;border:1px solid #e0e0e0;border-bottom-color:#d2d2d2;border-radius:2.5px;background:linear-gradient(#fefefe,#fafafa);box-sizing:border-box"></div>
<span class="t" style="left:14px;top:120px;transform:translate(0.66px,0px) rotate(0.001deg);font-size:8.6px;letter-spacing:-0.251px;color:#1e2022;">Reload &amp; Test</span>
<svg style="left:6.3px;top:122.6px" width="3" height="5" viewBox="0 0 3 5"><path d="M0.2 0.2V4.8L2.8 2.5Z" fill="#444"/></svg>
<div style="left:0px;top:139px;width:328px;height:16px;border:1px solid #e0e0e0;border-bottom-color:#d2d2d2;border-radius:2.5px;background:linear-gradient(#fefefe,#fafafa);box-sizing:border-box"></div>
<span class="t" style="left:14px;top:142px;transform:translate(0.66px,0px) rotate(0.001deg);font-size:8.6px;letter-spacing:-0.230px;color:#1e2022;">Mouse Selection</span>
<svg style="left:5.3px;top:145.4px" width="5" height="3" viewBox="0 0 5 3"><path d="M0.2 0.2H4.8L2.5 2.8Z" fill="#555"/></svg>
<div style="left:0px;top:189px;width:328px;height:16px;border:1px solid #e0e0e0;border-bottom-color:#d2d2d2;border-radius:2.5px;background:linear-gradient(#fefefe,#fafafa);box-sizing:border-box"></div>
<span class="t" style="left:14px;top:192px;transform:translate(0.66px,0px) rotate(0.001deg);font-size:8.6px;letter-spacing:-0.164px;color:#1e2022;">Preset Management</span>
<svg style="left:5.3px;top:195.4px" width="5" height="3" viewBox="0 0 5 3"><path d="M0.2 0.2H4.8L2.5 2.8Z" fill="#555"/></svg>
<div style="left:0px;top:239px;width:328px;height:16px;border:1px solid #e0e0e0;border-bottom-color:#d2d2d2;border-radius:2.5px;background:linear-gradient(#fefefe,#fafafa);box-sizing:border-box"></div>
<span class="t" style="left:14px;top:242px;transform:translate(0.66px,0px) rotate(0.001deg);font-size:8.6px;letter-spacing:-0.047px;color:#1e2022;">Button Mappings</span>
<svg style="left:5.3px;top:245.4px" width="5" height="3" viewBox="0 0 5 3"><path d="M0.2 0.2H4.8L2.5 2.8Z" fill="#555"/></svg>
<div style="left:0px;top:680px;width:328px;height:16px;border:1px solid #e0e0e0;border-bottom-color:#d2d2d2;border-radius:2.5px;background:linear-gradient(#fefefe,#fafafa);box-sizing:border-box"></div>
<span class="t" style="left:14px;top:683px;transform:translate(0.66px,0px) rotate(0.001deg);font-size:8.6px;letter-spacing:-0.238px;color:#1e2022;">Data Probe</span>
<svg style="left:6.3px;top:685.6px" width="3" height="5" viewBox="0 0 3 5"><path d="M0.2 0.2V4.8L2.8 2.5Z" fill="#444"/></svg>
<span class="t" style="left:1px;top:157px;transform:translate(0.66px,0.5px) rotate(0.001deg);font-size:8.6px;letter-spacing:-0.199px;color:#1e2022;">Mouse Model:</span>
<div style="left:54px;top:156px;width:272px;height:14px;border:1px solid #e0e0e0;border-bottom-color:#d2d2d2;border-radius:2.5px;background:linear-gradient(#fefefe,#f9f9f9);box-sizing:border-box"></div>
<span class="t" style="left:56px;top:157px;transform:translate(0.46px,0.5px) rotate(0.001deg);font-size:8.6px;letter-spacing:-0.254px;color:#1e2022;">Logitech MX Master 3S</span>
<svg style="left:316.8px;top:161.9px" width="4.4" height="2.4" viewBox="0 0 4.4 2.4"><path d="M0 0H4.4L2.2 2.4Z" fill="#444"/></svg>
<div style="left:1px;top:171px;width:325px;height:16px;border:1px solid #e0e0e0;border-bottom-color:#d2d2d2;border-radius:2.5px;background:linear-gradient(#fefefe,#f9f9f9);box-sizing:border-box"></div>
<span class="t" style="left:125px;top:173px;transform:translate(0.86px,0.5px) rotate(0.001deg);font-size:8.6px;letter-spacing:-0.230px;color:#1e2022;">Detect New Mouse...</span>
<span class="t" style="left:1px;top:207px;transform:translate(0.66px,0.5px) rotate(0.001deg);font-size:8.6px;letter-spacing:-0.305px;color:#1e2022;">Preset:</span>
<div style="left:28px;top:206px;width:298px;height:14px;border:1px solid #e0e0e0;border-bottom-color:#d2d2d2;border-radius:2.5px;background:linear-gradient(#fefefe,#f9f9f9);box-sizing:border-box"></div>
<span class="t" style="left:30px;top:207px;transform:translate(0.06px,0.5px) rotate(0.001deg);font-size:8.6px;letter-spacing:-0.243px;color:#1e2022;">MX Master 3S Default</span>
<svg style="left:316.8px;top:211.9px" width="4.4" height="2.4" viewBox="0 0 4.4 2.4"><path d="M0 0H4.4L2.2 2.4Z" fill="#444"/></svg>
<div style="left:1px;top:221px;width:325px;height:16px;border:1px solid #d8d8d8;border-bottom-color:#cccccc;border-radius:2.5px;background:#e7e7e7;box-sizing:border-box"></div>
<span class="t" style="left:122px;top:223px;transform:translate(0.66px,0.5px) rotate(0.001deg);font-size:8.6px;letter-spacing:-0.170px;color:#1e2022;">Disable Mouse Master</span>
<div style="left:1px;top:258px;width:9px;height:9px;border:1px solid #e2e2e2;border-radius:1.5px;background:#fff;box-sizing:border-box"></div>
<span class="t" style="left:12px;top:257px;transform:translate(0.96px,0px) rotate(0.001deg);font-size:8.6px;letter-spacing:-0.144px;color:#1e2022;">Enable context-sensitive bindings</span>
<span class="t" style="left:1px;top:272px;transform:translate(0.66px,0px) rotate(0.001deg);font-size:8.6px;letter-spacing:-0.177px;color:#1e2022;">Context:</span>
<div style="left:33px;top:270px;width:89px;height:15px;border:1px solid #e8e8e8;border-radius:2.5px;background:#fdfdfd;box-sizing:border-box"></div>
<span class="t" style="left:35px;top:272px;transform:translate(0.46px,0px) rotate(0.001deg);font-size:8.6px;letter-spacing:-0.134px;color:#c4c4c4;">Default (all modules)</span>
<svg style="left:114.3px;top:276.4px" width="4" height="2.2" viewBox="0 0 4 2.2"><path d="M0 0H4L2.0 2.2Z" fill="#c4c4c4"/></svg>
<div style="left:1px;top:286px;width:325px;height:98px;border:1px solid #e2e2e2;background:#fff;box-sizing:border-box"></div>
<div style="left:2px;top:287px;width:323px;height:12px;background:linear-gradient(#fefefe,#f8f8f8)"></div>
<div style="left:2px;top:299px;width:64px;height:1px;background:#e2e2e2"></div>
<div style="left:66px;top:299px;width:258px;height:1px;background:#cccccc"></div>
<div style="left:65px;top:287px;width:1px;height:12px;background:#e2e2e2"></div>
<div style="left:300px;top:287px;width:1px;height:12px;background:#e2e2e2"></div>
<span class="t" style="left:24px;top:287px;transform:translate(0.66px,0px) rotate(0.001deg);font-size:8.6px;letter-spacing:0.124px;color:#1e2022;">Button</span>
<span class="t" style="left:171px;top:287px;transform:translate(0.36px,0px) rotate(0.001deg);font-size:8.6px;letter-spacing:-0.048px;color:#1e2022;">Action</span>
<div style="left:2px;top:300.0px;width:7px;height:17px;background:linear-gradient(#fcfcfc,#f5f5f5)"></div>
<div style="left:66px;top:300.0px;width:234px;height:17px;background:linear-gradient(#ffffff,#f8f8f8)"></div>
<div style="left:301px;top:300.0px;width:22.6px;height:17px;background:linear-gradient(#fdfdfd,#f7f7f7)"></div>
<span class="t" style="left:3px;top:302px;transform:translate(0.46px,0.5px) rotate(0.001deg);font-size:8.6px;letter-spacing:-1.179px;color:#1e2022;">1</span>
<span class="t" style="left:10px;top:302px;transform:translate(0.66px,0.5px) rotate(0.001deg);font-size:8.6px;letter-spacing:-0.194px;color:#1e2022;">Middle Click</span>
<span class="t" style="left:67px;top:302px;transform:translate(0.46px,0.5px) rotate(0.001deg);font-size:8.6px;letter-spacing:-0.124px;color:#1e2022;">Reset 3D view to default orientation</span>
<svg style="left:291.5px;top:306.9px" width="4.5" height="2.4" viewBox="0 0 4.5 2.4"><path d="M0 0H4.5L2.25 2.4Z" fill="#444"/></svg>
<span class="t" style="left:302px;top:302px;transform:translate(0.56px,0.5px) rotate(0.001deg);font-size:8.6px;letter-spacing:-0.189px;color:#1e2022;">Clear</span>
<div style="left:2px;top:317.5px;width:7px;height:17px;background:linear-gradient(#fcfcfc,#f5f5f5)"></div>
<div style="left:66px;top:317.5px;width:234px;height:17px;background:linear-gradient(#ffffff,#f8f8f8)"></div>
<div style="left:301px;top:317.5px;width:22.6px;height:17px;background:linear-gradient(#fdfdfd,#f7f7f7)"></div>
<span class="t" style="left:3px;top:320px;transform:translate(0.46px,0px) rotate(0.001deg);font-size:8.6px;letter-spacing:-1.179px;color:#1e2022;">2</span>
<span class="t" style="left:10px;top:320px;transform:translate(0.66px,0px) rotate(0.001deg);font-size:8.6px;letter-spacing:-0.377px;color:#1e2022;">Back</span>
<span class="t" style="left:67px;top:320px;transform:translate(0.46px,0px) rotate(0.001deg);font-size:8.6px;letter-spacing:-0.248px;color:#1e2022;">-- None --</span>
<svg style="left:291.5px;top:324.4px" width="4.5" height="2.4" viewBox="0 0 4.5 2.4"><path d="M0 0H4.5L2.25 2.4Z" fill="#444"/></svg>
<span class="t" style="left:302px;top:320px;transform:translate(0.56px,0px) rotate(0.001deg);font-size:8.6px;letter-spacing:-0.189px;color:#1e2022;">Clear</span>
<div style="left:2px;top:335.0px;width:7px;height:17px;background:linear-gradient(#fcfcfc,#f5f5f5)"></div>
<div style="left:66px;top:335.0px;width:234px;height:17px;background:linear-gradient(#ffffff,#f8f8f8)"></div>
<div style="left:301px;top:335.0px;width:22.6px;height:17px;background:linear-gradient(#fdfdfd,#f7f7f7)"></div>
<span class="t" style="left:3px;top:337px;transform:translate(0.46px,0.5px) rotate(0.001deg);font-size:8.6px;letter-spacing:-1.179px;color:#1e2022;">3</span>
<span class="t" style="left:10px;top:337px;transform:translate(0.66px,0.5px) rotate(0.001deg);font-size:8.6px;letter-spacing:-0.190px;color:#1e2022;">Forward</span>
<span class="t" style="left:67px;top:337px;transform:translate(0.46px,0.5px) rotate(0.001deg);font-size:8.6px;letter-spacing:-0.248px;color:#1e2022;">-- None --</span>
<svg style="left:291.5px;top:341.9px" width="4.5" height="2.4" viewBox="0 0 4.5 2.4"><path d="M0 0H4.5L2.25 2.4Z" fill="#444"/></svg>
<span class="t" style="left:302px;top:337px;transform:translate(0.56px,0.5px) rotate(0.001deg);font-size:8.6px;letter-spacing:-0.189px;color:#1e2022;">Clear</span>
<div style="left:2px;top:352.5px;width:7px;height:17px;background:linear-gradient(#fcfcfc,#f5f5f5)"></div>
<div style="left:66px;top:352.5px;width:234px;height:17px;background:linear-gradient(#ffffff,#f8f8f8)"></div>
<div style="left:301px;top:352.5px;width:22.6px;height:17px;background:linear-gradient(#fdfdfd,#f7f7f7)"></div>
<span class="t" style="left:3px;top:355px;transform:translate(0.46px,0px) rotate(0.001deg);font-size:8.6px;letter-spacing:-1.179px;color:#1e2022;">4</span>
<span class="t" style="left:10px;top:355px;transform:translate(0.66px,0px) rotate(0.001deg);font-size:8.6px;letter-spacing:-0.065px;color:#1e2022;">Thumb Button</span>
<span class="t" style="left:67px;top:355px;transform:translate(0.46px,0px) rotate(0.001deg);font-size:8.6px;letter-spacing:-0.095px;color:#1e2022;">Toggle crosshair visibility</span>
<svg style="left:291.5px;top:359.4px" width="4.5" height="2.4" viewBox="0 0 4.5 2.4"><path d="M0 0H4.5L2.25 2.4Z" fill="#444"/></svg>
<span class="t" style="left:302px;top:355px;transform:translate(0.56px,0px) rotate(0.001deg);font-size:8.6px;letter-spacing:-0.189px;color:#1e2022;">Clear</span>
<svg style="left:0;top:284px" width="330" height="102" viewBox="0 284 330 102"><rect x="2" y="316.5" width="64" height="1" fill="#e2e2e2"/><rect x="66" y="316.4" width="258" height="1.1" fill="#cdcdcd"/><rect x="2" y="334.0" width="64" height="1" fill="#e2e2e2"/><rect x="66" y="333.9" width="258" height="1.1" fill="#cdcdcd"/><rect x="2" y="351.5" width="64" height="1" fill="#e2e2e2"/><rect x="66" y="351.4" width="258" height="1.1" fill="#cdcdcd"/><rect x="2" y="369.0" width="64" height="1" fill="#e2e2e2"/><rect x="66" y="368.9" width="258" height="1.1" fill="#cdcdcd"/><rect x="9" y="299.5" width="1" height="70" fill="#e2e2e2"/><rect x="65" y="299.5" width="1" height="70" fill="#d4d4d4"/><rect x="300" y="299.5" width="1" height="70" fill="#d0d0d0"/><rect x="323.6" y="299.5" width="0.8" height="70" fill="#e6e6e6"/></svg>
<div style="left:331px;top:93px;width:869px;height:603px;background:linear-gradient(rgb(117,121,190),rgb(193,195,232))"></div>
<div style="left:331px;top:80px;width:869px;height:13px;background:linear-gradient(#aeb7f1 3.85%,#6e7ee4 11.54%,#6878d6 19.23%,#6676d1 26.92%,#6a7ad8 34.62%,#6e7fe0 42.31%,#7484e8 50.00%,#7888ee 57.69%,#7a8af2 65.38%,#7989f0 73.08%,#7a8af3 80.77%,#7080da 88.46%,#6c74c3 96.15%)"></div>
<svg style="left:331px;top:92px" width="869" height="604" viewBox="331 92 869 604">
<g fill="none" stroke="#ff00ff" stroke-width="1">
<path d="M484 112.5H1046.6" stroke-opacity="0.38"/>
<path d="M483.5 112.6V675.6" stroke-opacity="0.40"/>
<path d="M1047.25 112.6V675.6" stroke-opacity="0.42"/>
<path d="M484 675.5H1047.2" stroke-opacity="0.52"/>
<path d="M578 206.5H952.6" stroke-opacity="0.44"/>
<path d="M577.5 206.6V582.4" stroke-opacity="0.44"/>
<path d="M952.75 206.6V582.6" stroke-opacity="0.45"/>
<path d="M578 582.3H953" stroke-opacity="0.42"/>
<path d="M484.2 113.2L577.3 206.3M1046.6 113.2L953 206.3M484.2 674.8L577.3 582.7M1046.6 674.8L953.2 582.9" stroke-opacity="0.42"/>
</g>
<g fill="#fff">
<path transform="matrix(0.016794 0 0 -0.018552 753.938 148.229)" d="M1272 389Q1272 194 1119.5 87.0Q967 -20 690 -20Q175 -20 93 338L278 375Q310 248 414.0 188.5Q518 129 697 129Q882 129 982.5 192.5Q1083 256 1083 379Q1083 448 1051.5 491.0Q1020 534 963.0 562.0Q906 590 827.0 609.0Q748 628 652 650Q485 687 398.5 724.0Q312 761 262.0 806.5Q212 852 185.5 913.0Q159 974 159 1053Q159 1234 297.5 1332.0Q436 1430 694 1430Q934 1430 1061.0 1356.5Q1188 1283 1239 1106L1051 1073Q1020 1185 933.0 1235.5Q846 1286 692 1286Q523 1286 434.0 1230.0Q345 1174 345 1063Q345 998 379.5 955.5Q414 913 479.0 883.5Q544 854 738 811Q803 796 867.5 780.5Q932 765 991.0 743.5Q1050 722 1101.5 693.0Q1153 664 1191.0 622.0Q1229 580 1250.5 523.0Q1272 466 1272 389Z"/>
<path transform="matrix(0.018325 0 0 -0.018133 760.137 665.750)" d="M189 0V1409H380V0Z"/>
<path transform="matrix(0.018339 0 0 -0.017885 491.819 407.000)" d="M1164 0 798 585H359V0H168V1409H831Q1069 1409 1198.5 1302.5Q1328 1196 1328 1006Q1328 849 1236.5 742.0Q1145 635 984 607L1384 0ZM1136 1004Q1136 1127 1052.5 1191.5Q969 1256 812 1256H359V736H820Q971 736 1053.5 806.5Q1136 877 1136 1004Z"/>
<path transform="matrix(0.018272 0 0 -0.017814 1013.030 406.900)" d="M168 0V1409H359V156H1071V0Z"/>
<path transform="matrix(0.014128 0 0 -0.014265 755.426 404.000)" d="M1258 985Q1258 785 1127.5 667.0Q997 549 773 549H359V0H168V1409H761Q998 1409 1128.0 1298.0Q1258 1187 1258 985ZM1066 983Q1066 1256 738 1256H359V700H746Q1066 700 1066 983Z"/>
</g>
</svg>
<svg style="left:331px;top:80px" width="60" height="12" viewBox="331 80 60 12">
<path d="M334.6 86.2H340.6" stroke="#3c4062" stroke-width="0.7"/><path d="M335.9 85.1H337.2L338.6 85.7V86.7L337.2 87.3H335.9Z" fill="#2e3250"/>
<g fill="none" stroke="#2c3050" stroke-width="0.9"><circle cx="360.5" cy="86.4" r="2"/><path d="M360.5 83V84.4M360.5 88.4V89.8M357.1 86.4H358.5M362.5 86.4H363.9M358.1 84L359.1 85M361.9 87.8L362.9 88.8M362.9 84L361.9 85M359.1 87.8L358.1 88.8"/></g>
<rect x="370.9" y="83.6" width="5.8" height="5.7" rx="0.8" fill="none" stroke="#1c1e36" stroke-width="0.8"/><rect x="370.9" y="83.4" width="5.8" height="1.5" fill="#15162a"/>
<path d="M346.9 85.5L348.6 84.2V89.7" stroke="#14162c" stroke-width="0.95" fill="none"/>
</svg>

<div style="left:1187px;top:697.3px;width:12.5px;height:12.2px;border:1px solid #e0e0e0;border-radius:2px;background:#fafafa;box-sizing:border-box"></div>
<svg style="left:1188.1px;top:697.9px" width="10" height="10" viewBox="0 0 10 10"><circle cx="4.9" cy="4.8" r="4.4" fill="#8a8a8a"/><path d="M3.1 3L6.7 6.6M6.7 3L3.1 6.6" stroke="#fff" stroke-width="1.3" stroke-linecap="round"/></svg>
</body></html>
